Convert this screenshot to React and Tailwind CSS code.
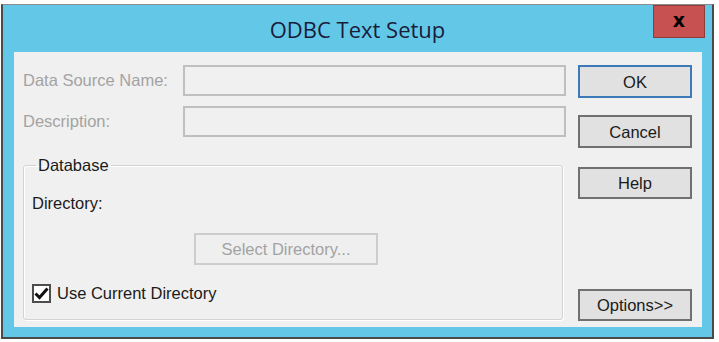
import React from "react";

function WinButton({ children, className = "" }) {
  return (
    <button
      className={`w-full flex items-center justify-center bg-[#e1e1e1] border-2 text-[16.5px] text-[#1a1a1a] leading-none pt-[1px] ${className}`}
    >
      {children}
    </button>
  );
}

export default function App() {
  return (
    <div className="w-[719px] h-[342px] bg-white font-['Liberation_Sans',Arial,sans-serif]">
      <div className="ml-[1px] mt-[4px] w-[713px] h-[335px] bg-[#63c8e8] border-2 border-t border-[#4a4a4a] border-t-[#8c8c8c] flex flex-col">
        {/* Title bar */}
        <div className="relative h-[47px] shrink-0 flex items-center justify-center">
          <span className="font-['Open_Sans',sans-serif] text-[22px] text-[#1b1b3a] leading-none">
            ODBC Text Setup
          </span>
          <div className="absolute right-[7px] top-0 w-[52px] h-[33px] bg-[#c75050] border border-[#8e3b3b] flex items-center justify-center">
            <span className="font-['DejaVu_Sans',sans-serif] font-bold text-[19px] leading-none text-black -mt-[3px]">
              x
            </span>
          </div>
        </div>

        {/* Body */}
        <div className="ml-[11px] mr-[10px] h-[275px] bg-[#f0f0f0] flex gap-[12px] pt-[13px] pl-[9px] pr-[10px]">
          {/* Left side */}
          <div className="w-[543px] flex flex-col">
            <div className="flex items-center h-[31px]">
              <span className="w-[160px] text-[16.5px] text-[#a3a3a3] leading-none">
                Data Source Name:
              </span>
              <div className="flex-1 h-full border-2 border-[#bfbfbf] bg-[#f0f0f0]" />
            </div>
            <div className="flex items-center h-[31px] mt-[10px]">
              <span className="w-[160px] text-[16.5px] text-[#a3a3a3] leading-none">
                Description:
              </span>
              <div className="flex-1 h-full border-2 border-[#bfbfbf] bg-[#f0f0f0]" />
            </div>

            <fieldset className="mt-[19px] w-[540px] h-[164px] border border-[#d3d3d3] rounded-[3px] shadow-[inset_1px_1px_0_#fff,1px_1px_0_#fff] px-[8px] pb-0 pt-0">
              <legend className="ml-[4px] px-[2px] text-[16.5px] leading-[18px] text-[#1a1a1a]">
                Database
              </legend>
              <div className="mt-[20px] text-[16.5px] leading-[18px] text-[#1a1a1a]">
                Directory:
              </div>
              <div className="mt-[21px] ml-[162px] w-[184px] h-[32px] border-2 border-[#cdcdcd] bg-[#efefef] flex items-center justify-center text-[16.5px] leading-none text-[#a3a3a3]">
                Select Directory...
              </div>
              <div className="mt-[19px] flex items-center gap-[6px]">
                <div className="w-[19px] h-[19px] border-2 border-[#4d4d4d] bg-white flex items-center justify-center">
                  <svg width="15" height="13" viewBox="0 0 15 13">
                    <path
                      d="M1.5 6.5 L5.5 10.5 L13.5 1.5"
                      fill="none"
                      stroke="#111"
                      strokeWidth="3"
                    />
                  </svg>
                </div>
                <span className="text-[16.5px] leading-none text-[#1a1a1a]">
                  Use Current Directory
                </span>
              </div>
            </fieldset>
          </div>

          {/* Right buttons */}
          <div className="w-[114px] flex flex-col pb-[6px]">
            <WinButton className="h-[33px] border-[#3d7ab8]">OK</WinButton>
            <WinButton className="h-[33px] mt-[17px] border-[#707070]">Cancel</WinButton>
            <WinButton className="h-[32px] mt-[19px] border-[#707070]">Help</WinButton>
            <WinButton className="h-[32px] mt-auto border-[#707070]">Options&gt;&gt;</WinButton>
          </div>
        </div>
      </div>
    </div>
  );
}
